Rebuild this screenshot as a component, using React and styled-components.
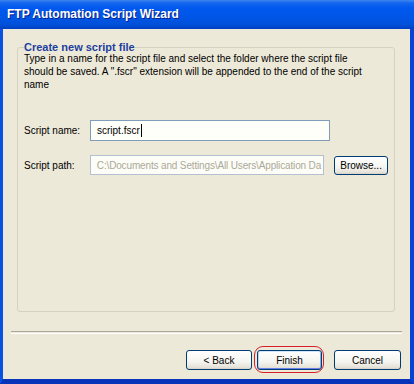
import React from "react";
import styled, { createGlobalStyle } from "styled-components";

const GlobalStyle = createGlobalStyle`
  html, body {
    margin: 0;
    padding: 0;
    background: #ece9d8;
  }
  body {
    font-family: "Liberation Sans", Arial, sans-serif;
    font-size: 10px;
    color: #000;
  }
`;

const Window = styled.div`
  display: flex;
  flex-direction: column;
  width: 414px;
  height: 384px;
  overflow: hidden;
`;

const TitleBar = styled.div`
  display: flex;
  align-items: center;
  height: 29px;
  padding: 0 0 1px 7px;
  box-sizing: border-box;
  background: linear-gradient(
    to bottom,
    #3d86f0 0px,
    #1466ee 3px,
    #0058ee 8px,
    #0055e5 18px,
    #0150d8 25px,
    #003fc2 29px
  );
  color: #fff;
  font-weight: bold;
  font-size: 12px;
  text-shadow: 1px 1px 0 #0a1f8a;
`;

const Frame = styled.div`
  flex: 1;
  display: flex;
  flex-direction: column;
  background: #ece9d8;
  border-left: 3px solid #0a52e2;
  border-right: 4px solid #0842d2;
  border-bottom: 5px solid #0734b8;
`;

const GroupBox = styled.fieldset`
  flex: 1;
  margin: 12px 15px 0 14px;
  padding: 0 6px;
  border: 1px solid #d5d2c1;
  border-radius: 3px;
  min-width: 0;
`;

const GroupTitle = styled.legend`
  padding: 0;
  margin: 0;
  font-size: 11px;
  line-height: 13px;
  font-weight: bold;
  color: #1e3f9e;
`;

const Description = styled.p`
  margin: -2px 0 0 0;
  font-size: 10px;
  line-height: 13px;
  white-space: nowrap;
`;

const FieldRow = styled.div`
  display: flex;
  align-items: center;
  margin-top: ${(props) => props.$top}px;
`;

const Label = styled.div`
  width: 66px;
  font-size: 10px;
`;

const TextBox = styled.div`
  display: flex;
  align-items: center;
  box-sizing: border-box;
  width: ${(props) => props.$width}px;
  height: ${(props) => props.$height}px;
  padding-left: 6px;
  border: 1px solid ${(props) => (props.$disabled ? "#b4c0cf" : "#7f9db9")};
  background: ${(props) => (props.$disabled ? "#fdfdf7" : "#fffff9")};
  color: ${(props) => (props.$disabled ? "#aca899" : "#000")};
  font-size: 10px;
  letter-spacing: ${(props) => (props.$disabled ? "-0.15px" : "0")};
  white-space: nowrap;
  overflow: hidden;
`;

const Caret = styled.span`
  display: inline-block;
  width: 1px;
  height: 13px;
  margin-left: 1px;
  background: #000;
`;

const Button = styled.button`
  box-sizing: border-box;
  width: ${(props) => props.$width}px;
  height: ${(props) => props.$height || 20}px;
  margin-left: ${(props) => props.$gap || 0}px;
  padding: 0;
  border: 1px solid #003c74;
  border-radius: 3px;
  background: linear-gradient(to bottom, #ffffff 0%, #f4f4f0 60%, #e6e3d8 90%, #d6d0c5 100%);
  box-shadow: ${(props) =>
    props.$default
      ? "inset 0 1px 0 #cee7ff, inset 0 -1px 0 #6982ee, inset 1px 0 0 #bcd4f6, inset -1px 0 0 #89ade4"
      : "none"};
  font-family: "Liberation Sans", Arial, sans-serif;
  font-size: 10px;
  color: #000;
`;

const Separator = styled.div`
  margin: 19px 8px 0 8px;
  height: 1px;
  border-top: 1px solid #aca899;
  border-bottom: 1px solid #ffffff;
`;

const ButtonRow = styled.div`
  display: flex;
  justify-content: flex-end;
  align-items: center;
  padding: 16px 9px 9px 0;
`;

const Highlight = styled.div`
  position: relative;
  margin: 0 12px 0 5px;

  &::after {
    content: "";
    position: absolute;
    top: -4px;
    bottom: -3px;
    left: -3px;
    right: -2px;
    border: 1px solid #d8202a;
    border-radius: 9px;
    pointer-events: none;
  }
`;

export default function App() {
  return (
    <>
      <GlobalStyle />
      <Window>
        <TitleBar>FTP Automation Script Wizard</TitleBar>
        <Frame>
          <GroupBox>
            <GroupTitle>Create new script file</GroupTitle>
            <Description>
              Type in a name for the script file and select the folder where the script file
              <br />
              should be saved. A ".fscr" extension will be appended to the end of the script
              <br />
              name
            </Description>
            <FieldRow $top={29}>
              <Label>Script name:</Label>
              <TextBox $width={240} $height={21}>
                script.fscr
                <Caret />
              </TextBox>
            </FieldRow>
            <FieldRow $top={14}>
              <Label>Script path:</Label>
              <TextBox $width={235} $height={20} $disabled>
                C:\Documents and Settings\All Users\Application Da
              </TextBox>
              <Button $width={54} $height={19} $gap={10}>
                Browse...
              </Button>
            </FieldRow>
          </GroupBox>
          <Separator />
          <ButtonRow>
            <Button $width={66}>&lt; Back</Button>
            <Highlight>
              <Button $width={65} $default>
                Finish
              </Button>
            </Highlight>
            <Button $width={67}>Cancel</Button>
          </ButtonRow>
        </Frame>
      </Window>
    </>
  );
}
